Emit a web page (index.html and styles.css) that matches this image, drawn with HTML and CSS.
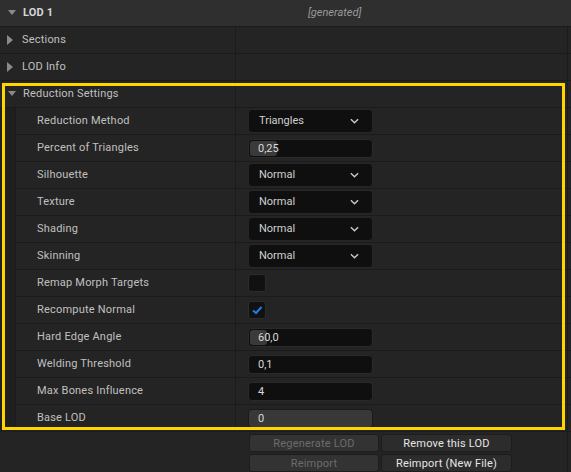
FILE: index.html
```html
<!DOCTYPE html>
<html lang="en">
<head>
<meta charset="UTF-8">
<meta name="viewport" content="width=device-width, initial-scale=1.0">
<title>LOD 1 - Reduction Settings</title>
<link rel="stylesheet" href="styles.css">
</head>
<body>

<div class="panel">
    <div class="row category">
        <div class="name title"><span class="arrow down"></span>LOD 1</div>
        <div class="value generated">[generated]</div>
        <div class="edge"></div>
    </div>
    <div class="row">
        <div class="name"><span class="arrow right"></span>Sections</div>
        <div class="value"></div>
        <div class="edge"></div>
    </div>
    <div class="row">
        <div class="name"><span class="arrow right"></span>LOD Info</div>
        <div class="value"></div>
        <div class="edge"></div>
    </div>
    <div class="row">
        <div class="name"><span class="arrow down"></span>Reduction Settings</div>
        <div class="value"></div>
        <div class="edge"></div>
    </div>

    <div class="row child">
        <div class="indent"></div>
        <div class="name">Reduction Method</div>
        <div class="value">
            <div class="combo">Triangles<svg class="chevron" viewBox="0 0 10 6"><polyline points="1,1 5,5 9,1"/></svg></div>
        </div>
        <div class="edge"></div>
    </div>
    <div class="row child">
        <div class="indent"></div>
        <div class="name">Percent of Triangles</div>
        <div class="value">
            <div class="number"><span class="fill" style="width: 27px"></span><span class="num">0,25</span></div>
        </div>
        <div class="edge"></div>
    </div>
    <div class="row child">
        <div class="indent"></div>
        <div class="name">Silhouette</div>
        <div class="value">
            <div class="combo">Normal<svg class="chevron" viewBox="0 0 10 6"><polyline points="1,1 5,5 9,1"/></svg></div>
        </div>
        <div class="edge"></div>
    </div>
    <div class="row child">
        <div class="indent"></div>
        <div class="name">Texture</div>
        <div class="value">
            <div class="combo">Normal<svg class="chevron" viewBox="0 0 10 6"><polyline points="1,1 5,5 9,1"/></svg></div>
        </div>
        <div class="edge"></div>
    </div>
    <div class="row child">
        <div class="indent"></div>
        <div class="name">Shading</div>
        <div class="value">
            <div class="combo">Normal<svg class="chevron" viewBox="0 0 10 6"><polyline points="1,1 5,5 9,1"/></svg></div>
        </div>
        <div class="edge"></div>
    </div>
    <div class="row child">
        <div class="indent"></div>
        <div class="name">Skinning</div>
        <div class="value">
            <div class="combo">Normal<svg class="chevron" viewBox="0 0 10 6"><polyline points="1,1 5,5 9,1"/></svg></div>
        </div>
        <div class="edge"></div>
    </div>
    <div class="row child">
        <div class="indent"></div>
        <div class="name">Remap Morph Targets</div>
        <div class="value"><div class="check"></div></div>
        <div class="edge"></div>
    </div>
    <div class="row child">
        <div class="indent"></div>
        <div class="name">Recompute Normal</div>
        <div class="value">
            <div class="check"><svg viewBox="0 0 12 12"><polyline points="2,6.5 5,9 10.5,3"/></svg></div>
        </div>
        <div class="edge"></div>
    </div>
    <div class="row child">
        <div class="indent"></div>
        <div class="name">Hard Edge Angle</div>
        <div class="value">
            <div class="number"><span class="fill" style="width: 17px"></span><span class="num">60,0</span></div>
        </div>
        <div class="edge"></div>
    </div>
    <div class="row child">
        <div class="indent"></div>
        <div class="name">Welding Threshold</div>
        <div class="value"><div class="number"><span class="num">0,1</span></div></div>
        <div class="edge"></div>
    </div>
    <div class="row child">
        <div class="indent"></div>
        <div class="name">Max Bones Influence</div>
        <div class="value"><div class="number"><span class="num">4</span></div></div>
        <div class="edge"></div>
    </div>
    <div class="row child">
        <div class="indent"></div>
        <div class="name">Base LOD</div>
        <div class="value"><div class="number locked"><span class="num">0</span></div></div>
        <div class="edge"></div>
    </div>

    <div class="row actions">
        <div class="name"></div>
        <div class="value">
            <div class="buttons">
                <button class="btn" disabled>Regenerate LOD</button>
                <button class="btn">Remove this LOD</button>
                <button class="btn" disabled>Reimport</button>
                <button class="btn">Reimport (New File)</button>
            </div>
        </div>
        <div class="edge"></div>
    </div>

    <div class="focus-frame"></div>
</div>

</body>
</html>
```

FILE: styles.css
```css
body {
    margin: 0;
    background-color: #242424;
    font-family: Roboto, "Liberation Sans", sans-serif;
    font-size: 11px;
    color: #c0c0c0;
}
.panel {
    position: relative;
    width: 571px;
    height: 472px;
    overflow: hidden;
}
.row {
    display: grid;
    grid-template-columns: 236px 332px 3px;
    height: 27px;
}
.row > div {
    border-bottom: 1px solid #1b1b1b;
    box-sizing: border-box;
}
.name {
    display: flex;
    align-items: center;
    padding: 0 0 1px 7px;
    border-right: 1px solid #1b1b1b;
    letter-spacing: 0.2px;
}
.value {
    display: flex;
    align-items: center;
    padding-left: 12px;
    border-right: 1px solid #1b1b1b;
}
.category {
    background-color: #2f2f2f;
}
.category .name,
.category .value {
    border-right: none;
}
.title {
    font-weight: bold;
    color: #d6d6d6;
}
.generated {
    font-style: italic;
    color: #9a9a9a;
    padding: 0 0 1px 72px;
}
.arrow {
    display: inline-block;
    width: 0;
    height: 0;
    margin-right: 7px;
}
.arrow.down {
    border-left: 4.5px solid transparent;
    border-right: 4.5px solid transparent;
    border-top: 5px solid #8a8a8a;
    margin-left: 1px;
}
.arrow.right {
    border-top: 5px solid transparent;
    border-bottom: 5px solid transparent;
    border-left: 6px solid #8a8a8a;
    margin-left: 0;
    margin-right: 9px;
}

/* nested property rows */
.child {
    grid-template-columns: 16px 220px 332px 3px;
}
.child > .indent {
    background-color: #1f1f1f;
    border-bottom: none;
    border-right: 1px solid #1b1b1b;
}
.child .name {
    padding-left: 21px;
}

/* value widgets */
.combo {
    display: flex;
    align-items: center;
    justify-content: space-between;
    box-sizing: border-box;
    width: 125px;
    height: 24px;
    padding: 0 13px 1px 10px;
    background-color: #0f0f0f;
    border: 1px solid #262626;
    border-radius: 4px;
    color: #cfcfcf;
}
.chevron {
    width: 9px;
    height: 6px;
    fill: none;
    stroke: #c8c8c8;
    stroke-width: 1.6;
}
.number {
    position: relative;
    display: flex;
    align-items: center;
    box-sizing: border-box;
    width: 125px;
    height: 19px;
    padding-left: 9px;
    background-color: #0f0f0f;
    border: 1px solid #2a2a2a;
    border-radius: 4px;
    color: #d8d8d8;
}
.number .fill {
    position: absolute;
    left: 1px;
    top: 1px;
    bottom: 1px;
    background-color: #3a3a3a;
    border-radius: 3px;
}
.number .num {
    position: relative;
}
.number.locked {
    background-color: #383838;
    border-color: #1a1a1a;
}
.check {
    display: flex;
    align-items: center;
    justify-content: center;
    box-sizing: border-box;
    width: 18px;
    height: 18px;
    background-color: #111;
    border: 1px solid #2c2c2c;
    border-radius: 3px;
}
.check svg {
    width: 12px;
    height: 12px;
    fill: none;
    stroke: #1f7fe6;
    stroke-width: 2;
}

/* bottom action buttons */
.actions {
    height: 41px;
}
.actions > div {
    border-bottom: none;
}
.actions .name {
    border-right: none;
}
.actions .value {
    align-items: flex-start;
    padding: 2px 0 0 13px;
}
.buttons {
    display: grid;
    grid-template-columns: 130px 131px;
    grid-auto-rows: 18px;
    gap: 2px 2px;
}
.btn {
    font-family: Roboto, "Liberation Sans", sans-serif;
    font-size: 11px;
    color: #e6e6e6;
    background-color: #2c2c2c;
    border: 1px solid #1d1d1d;
    border-radius: 3px;
    padding: 0;
    letter-spacing: 0.2px;
}
.btn:disabled {
    color: #6c6c6c;
    background-color: #333;
}

.focus-frame {
    position: absolute;
    left: 2px;
    top: 83px;
    width: 563px;
    height: 347px;
    box-sizing: border-box;
    border: 3px solid #ffd500;
    pointer-events: none;
}
```
